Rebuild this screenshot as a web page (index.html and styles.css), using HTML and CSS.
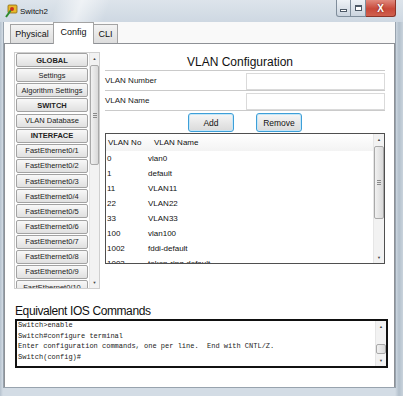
FILE: index.html
```html
<!DOCTYPE html>
<html lang="en">
<head>
  <meta charset="UTF-8" />
  <title>Switch2</title>
  <link rel="stylesheet" href="styles.css">
</head>
<body>

  <div class="window">

    <!-- TITLE BAR -->
    <div class="titlebar">
      <svg class="app-icon" width="13" height="14" viewBox="0 0 13 14">
        <rect x="3" y="1" width="9" height="8" rx="1" fill="#e8b92c" stroke="#8a6a12" stroke-width="0.8"/>
        <path d="M1 13 L6 6" stroke="#2e8b2e" stroke-width="2"/>
        <circle cx="7" cy="5" r="2" fill="#c8321e"/>
      </svg>
      <span class="title">Switch2</span>
      <div class="controls">
        <a class="ctl ctl-min"><span></span></a>
        <a class="ctl ctl-max"><span></span></a>
        <a class="ctl ctl-close">X</a>
      </div>
    </div>

    <div class="client">
      <div class="tabs">
        <a class="tab tab-physical">Physical</a>
        <a class="tab tab-config active">Config</a>
        <a class="tab tab-cli">CLI</a>
      </div>

      <div class="panel">
        <div class="top">

          <!-- LEFT MENU -->
          <div class="navlist">
            <div class="navitems">
              <a class="navbtn head">GLOBAL</a>
              <a class="navbtn">Settings</a>
              <a class="navbtn">Algorithm Settings</a>
              <a class="navbtn head">SWITCH</a>
              <a class="navbtn">VLAN Database</a>
              <a class="navbtn head">INTERFACE</a>
              <a class="navbtn">FastEthernet0/1</a>
              <a class="navbtn">FastEthernet0/2</a>
              <a class="navbtn">FastEthernet0/3</a>
              <a class="navbtn">FastEthernet0/4</a>
              <a class="navbtn">FastEthernet0/5</a>
              <a class="navbtn">FastEthernet0/6</a>
              <a class="navbtn">FastEthernet0/7</a>
              <a class="navbtn">FastEthernet0/8</a>
              <a class="navbtn">FastEthernet0/9</a>
              <a class="navbtn">FastEthernet0/10</a>
            </div>
            <div class="vscroll nav-scroll">
              <div class="arrow">&#9650;</div>
              <div class="track"><div class="thumb"><span class="grip"></span></div></div>
              <div class="arrow">&#9660;</div>
            </div>
          </div>

          <!-- VLAN CONFIG -->
          <div class="main">
            <div class="main-title">VLAN Configuration</div>
            <div class="field">
              <span class="label">VLAN Number</span>
              <input class="input" type="text">
            </div>
            <div class="field">
              <span class="label">VLAN Name</span>
              <input class="input" type="text">
            </div>
            <div class="actions">
              <button class="btn">Add</button>
              <button class="btn">Remove</button>
            </div>

            <div class="vlan-table">
              <div class="rows">
                <div class="row header"><span>VLAN No</span><span>VLAN Name</span></div>
                <div class="row"><span>0</span><span>vlan0</span></div>
                <div class="row"><span>1</span><span>default</span></div>
                <div class="row"><span>11</span><span>VLAN11</span></div>
                <div class="row"><span>22</span><span>VLAN22</span></div>
                <div class="row"><span>33</span><span>VLAN33</span></div>
                <div class="row"><span>100</span><span>vlan100</span></div>
                <div class="row"><span>1002</span><span>fddi-default</span></div>
                <div class="row"><span>1003</span><span>token-ring-default</span></div>
              </div>
              <div class="vscroll table-scroll">
                <div class="arrow">&#9650;</div>
                <div class="track"><div class="thumb"><span class="grip"></span></div></div>
                <div class="arrow">&#9660;</div>
              </div>
            </div>
          </div>
        </div>

        <!-- IOS COMMANDS -->
        <div class="ios-title">Equivalent IOS Commands</div>
        <div class="console">
          <pre class="console-text">Switch&gt;enable
Switch#configure terminal
Enter configuration commands, one per line.  End with CNTL/Z.
Switch(config)#</pre>
          <div class="vscroll console-scroll">
            <div class="arrow">&#9650;</div>
            <div class="track"><div class="thumb"></div></div>
            <div class="arrow">&#9660;</div>
          </div>
        </div>
      </div>
    </div>
  </div>

</body>
</html>
```

FILE: styles.css
```css
* {
  box-sizing: border-box;
  margin: 0;
  padding: 0;
}

body {
  font-family: 'Liberation Sans', Arial, sans-serif;
  background: #fff;
}

.window {
  width: 403px;
  height: 396px;
  display: flex;
  flex-direction: column;
  overflow: hidden;
  background: linear-gradient(90deg, #b7c3cf, #d3dce5 3px, #d3dce5 395px, #b3c0cc 399px, #c9d3dc);
}

/* title bar */
.titlebar {
  height: 22px;
  display: flex;
  align-items: flex-start;
  padding: 0 7px 0 5px;
  background:
    linear-gradient(110deg, transparent 14%, rgba(255, 255, 255, 0.55) 20%, transparent 27%),
    linear-gradient(#dde4eb, #ced8e2);
}

.app-icon {
  margin-top: 4px;
}

.title {
  font-size: 8px;
  color: #111;
  margin: 7px 0 0 2px;
}

.controls {
  margin-left: auto;
  display: flex;
}

.ctl {
  height: 17px;
  display: flex;
  align-items: center;
  justify-content: center;
  border: 1px solid #7f8d9b;
  border-top: none;
  background: linear-gradient(#eef2f6, #cbd4de);
}

.ctl-min {
  width: 15px;
  border-radius: 0 0 0 3px;
}

.ctl-min span {
  width: 7px;
  height: 3px;
  margin-top: 4px;
  background: #fff;
  border: 1px solid #4d5966;
}

.ctl-max {
  width: 15px;
  border-left: none;
}

.ctl-max span {
  width: 7px;
  height: 6px;
  border: 1px solid #4d5966;
  border-top-width: 2px;
  background: #fff;
}

.ctl-close {
  width: 30px;
  border-left: none;
  border-color: #8c3428;
  border-radius: 0 0 3px 0;
  background: linear-gradient(#e08a7e, #c8493a 55%, #d0604e);
  color: #fff;
  font-size: 10px;
  font-weight: bold;
  text-shadow: 0 0 2px #6d1c12;
}

/* client area */
.client {
  flex: 1;
  margin: 0 7px 8px 3px;
  border: 1px solid #98a3ae;
  border-top: none;
  background: #f9f9f9;
  display: flex;
  flex-direction: column;
}

.tabs {
  height: 21px;
  display: flex;
  align-items: flex-end;
  padding-left: 6px;
}

.tab {
  height: 19px;
  border: 1px solid #a3a3a3;
  border-bottom: none;
  background: linear-gradient(#f3f3f3, #dddddd);
  font-size: 9px;
  color: #111;
  display: flex;
  align-items: center;
  justify-content: center;
  margin-right: -1px;
}

.tab-physical { width: 44px; }
.tab-config { width: 41px; }
.tab-cli { width: 25px; }

.tab.active {
  height: 22px;
  background: #fff;
  margin-bottom: -1px;
  position: relative;
  z-index: 1;
  padding-bottom: 3px;
}

.panel {
  flex: 1;
  background: #fff;
  border: 1px solid #8e9196;
  border-bottom: none;
  padding: 8px 9px 0 9px;
}

.top {
  height: 240px;
  display: flex;
  align-items: flex-start;
  gap: 5px;
}

/* left menu */
.navlist {
  width: 86px;
  height: 237px;
  border: 1px solid #cfcfcf;
  display: flex;
  overflow: hidden;
}

.navitems {
  flex: 1;
  padding: 0 1px;
  display: flex;
  flex-direction: column;
  gap: 1.15px;
  overflow: hidden;
}

.navbtn {
  flex-shrink: 0;
  height: 14px;
  border: 1px solid #a2a2a2;
  border-radius: 2px;
  background: linear-gradient(#f8f8f8, #e0e0e0);
  font-size: 7.5px;
  color: #222;
  display: flex;
  align-items: center;
  justify-content: center;
  white-space: nowrap;
}

.navbtn.head {
  font-weight: bold;
}

/* scrollbars */
.vscroll {
  width: 10px;
  display: flex;
  flex-direction: column;
  background: #f2f2f2;
  border-left: 1px solid #e6e6e6;
}

.vscroll .arrow {
  height: 11px;
  font-size: 4px;
  color: #444;
  display: flex;
  align-items: center;
  justify-content: center;
}

.vscroll .track {
  flex: 1;
  display: flex;
  flex-direction: column;
}

.vscroll .thumb {
  margin-top: 1px;
  border: 1px solid #a9a9a9;
  border-radius: 2px;
  background: linear-gradient(90deg, #f1f1f1, #d9d9d9);
  display: flex;
  align-items: center;
  justify-content: center;
}

.grip {
  width: 4px;
  height: 5px;
  background: repeating-linear-gradient(#8a8a8a 0 1px, transparent 1px 2px);
}

.nav-scroll .thumb {
  height: 100px;
}

/* VLAN configuration */
.main {
  width: 280px;
  display: flex;
  flex-direction: column;
}

.main-title {
  height: 19px;
  padding: 3px 10px 0 0;
  line-height: 15px;
  font-size: 12px;
  text-align: center;
  color: #111;
  border-bottom: 1px solid #cacaca;
}

.field {
  height: 20px;
  display: flex;
  align-items: center;
  justify-content: space-between;
  border-bottom: 1px solid #cacaca;
}

.label {
  font-size: 8px;
  color: #1a1a1a;
}

.input {
  width: 139px;
  height: 17px;
  margin-top: 1px;
  border: 1px solid #dadada;
  background: #fff;
}

.actions {
  height: 22px;
  display: flex;
  justify-content: center;
  gap: 22px;
  padding-top: 2px;
}

.btn {
  width: 46px;
  height: 19px;
  border: 1px solid #3d9fd8;
  border-radius: 3px;
  background: linear-gradient(#f6f6f6, #dadada);
  box-shadow: inset 0 0 0 1px #c6e6f7;
  font-family: 'Liberation Sans', Arial, sans-serif;
  font-size: 8.5px;
  color: #111;
}

.vlan-table {
  height: 131px;
  border: 1px solid #4f4f4f;
  display: flex;
  overflow: hidden;
}

.rows {
  flex: 1;
  overflow: hidden;
}

.row {
  height: 15px;
  display: grid;
  grid-template-columns: 41px 1fr;
  align-items: center;
  font-size: 8px;
  color: #111;
  padding-left: 1px;
}

.row.header {
  height: 17px;
  background: linear-gradient(#ffffff, #f3f3f3);
  padding-left: 2px;
}

.row.header span + span {
  padding-left: 5px;
}

.table-scroll {
  width: 11px;
}

.table-scroll .thumb {
  height: 73px;
}

/* IOS commands */
.ios-title {
  margin-top: 12px;
  font-size: 12px;
  line-height: 14px;
  letter-spacing: -0.4px;
  color: #111;
  padding-left: 1px;
}

.console {
  width: 373px;
  height: 49px;
  margin: 1px 0 0 1px;
  border: 2px solid #111;
  display: flex;
}

.console-text {
  flex: 1;
  font-family: 'Liberation Mono', 'Courier New', monospace;
  font-size: 7px;
  line-height: 10.5px;
  color: #222;
  padding-left: 1px;
  margin-top: -1px;
}

.console-scroll {
  width: 11px;
}

.console-scroll .thumb {
  height: 10px;
  margin-top: 12px;
}
```
